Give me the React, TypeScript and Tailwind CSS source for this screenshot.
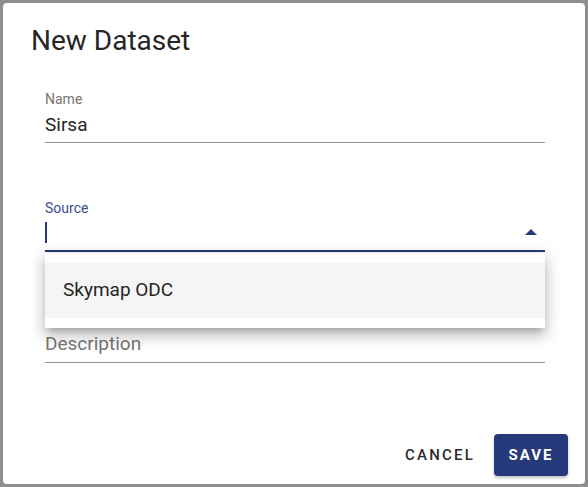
export default function App() {
  return (
    <div
      className="w-[588px] h-[487px] bg-[#8e8e8e] p-[3px]"
      style={{ fontFamily: "Roboto, 'Liberation Sans', sans-serif" }}
    >
      <div className="bg-white rounded-[4px] h-full flex flex-col">
        <h2 className="mt-[24px] pl-[28px] text-[28px] leading-[28px] text-[#262626] font-normal">
          New Dataset
        </h2>

        <div className="pl-[42px] pr-[40px]">
          {/* Name */}
          <div className="mt-[37px]">
            <div className="text-[14px] leading-[14px] text-[#757575]">Name</div>
            <div className="mt-[9px] pb-[8px] border-b border-[#949494] text-[19px] leading-[19px] text-[#262626]">
              Sirsa
            </div>
          </div>

          {/* Source (open select) */}
          <div className="relative mt-[58px]">
            <div className="text-[14px] leading-[14px] text-[#3b4c92]">Source</div>
            <div className="h-[35px] flex items-start border-b-2 border-[#27397a] box-content">
              <span className="mt-[7px] w-[2px] h-[21px] bg-[#27397a]" />
              <svg
                className="ml-auto mr-[8px] mt-[14px]"
                width="12"
                height="6"
                viewBox="0 0 12 6"
              >
                <polygon points="0,6 6,0 12,6" fill="#27397a" />
              </svg>
            </div>

            <div className="absolute left-0 right-0 top-full mt-[1px] bg-white py-[10px] shadow-[0_5px_6px_-3px_rgba(0,0,0,0.2),0_9px_12px_1px_rgba(0,0,0,0.14),0_3px_16px_2px_rgba(0,0,0,0.12)] z-10">
              <div className="h-[55px] bg-[#f5f5f5] pl-[18px] flex items-center text-[19px] text-[#262626]">
                Skymap ODC
              </div>
            </div>
          </div>

          {/* Description */}
          <div className="mt-[82px] pb-[9px] border-b border-[#949494] text-[19px] leading-[19px] text-[#757575]">
            Description
          </div>
        </div>

        <div className="mt-auto flex justify-end items-center pr-[17px] pb-[8px]">
          <button className="mr-[19px] text-[15px] font-medium tracking-[2.2px] text-[#2b2b2b]">
            CANCEL
          </button>
          <button className="w-[74px] h-[42px] rounded-[4px] bg-[#26397a] text-white text-[15px] font-bold tracking-[2px] shadow-[0_2px_3px_rgba(0,0,0,0.25)]">
            SAVE
          </button>
        </div>
      </div>
    </div>
  );
}
